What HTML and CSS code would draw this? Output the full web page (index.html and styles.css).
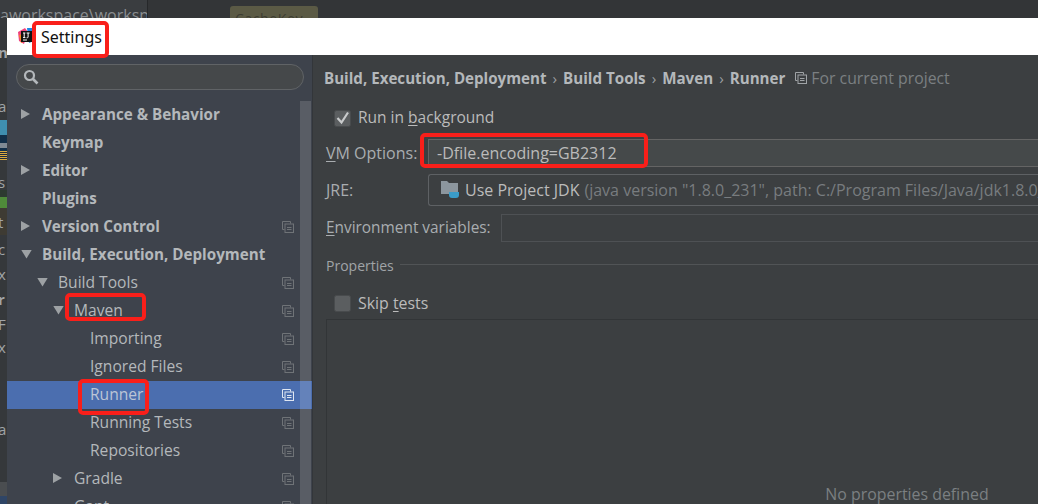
FILE: index.html
```html
<!DOCTYPE html>
<html lang="en">
<head>
<meta charset="utf-8">
<title>Settings</title>
<link rel="stylesheet" href="styles.css">
</head>
<body>
<svg class="defs" width="0" height="0" aria-hidden="true">
  <symbol id="copy" viewBox="0 0 12 12">
    <path d="M.5 8.5V.5h8v2" fill="none" stroke="currentColor"/>
    <path d="M.5 8.5h2" fill="none" stroke="currentColor"/>
    <rect x="3" y="3" width="8.5" height="8.5" fill="none" stroke="currentColor"/>
    <path d="M5 6.5h4.5M5 8.5h4.5" stroke="currentColor"/>
  </symbol>
</svg>
<div class="desktop">
  <div class="topbar">
    <div class="path">aworkspace\workspa</div>
    <div class="tab">CacheKey</div>
  </div>
  <div class="strip">
    <div class="s s1">n</div>
    <div class="s s2">a</div>
    <div class="s s3"></div>
    <div class="s s4"><i></i></div>
    <div class="s s5"></div>
    <div class="s s6">s</div>
    <div class="s s7"></div>
    <div class="s s8"></div>
    <div class="s s9">t</div>
    <div class="s s10">c</div>
    <div class="s s11">x</div>
    <div class="s s12">r</div>
    <div class="s s13">F</div>
    <div class="s s14">x</div>
    <div class="s s15">a</div>
    <div class="s s16"></div>
    <div class="s s17"></div>
  </div>

  <div class="dialog">
    <header class="titlebar">
      <svg class="logo" width="17" height="17" viewBox="0 0 17 17">
        <path d="M0 4 7 0l3 4-4 12-5-3z" fill="#f0417c"/>
        <path d="M9 0h5l3 4-1 9-5 2z" fill="#1e88e5"/>
        <path d="M1 7l4-1 2 7-4 2z" fill="#f58a1f"/>
        <rect x="3" y="3" width="11" height="11" fill="#111"/>
        <path d="M5 5h2.4M6.2 5v4.6M5 9.6h2.4M8.6 5h3M10.1 5v4.2q0 .7-1.5.6M5 12h4" stroke="#fff" fill="none"/>
      </svg>
      <span class="title">Settings</span>
    </header>
    <div class="content">
      <aside class="sidebar">
        <div class="search">
          <svg width="16" height="16" viewBox="0 0 16 16"><circle cx="6.5" cy="6.5" r="4.5" fill="none" stroke="#b4b8bb" stroke-width="2.2"/><path d="M10 10l4.5 4.5" stroke="#b4b8bb" stroke-width="2.6"/></svg>
        </div>
        <div class="treewrap">
          <ul class="tree">
            <li class="row bold l0"><span class="arrow right"></span>Appearance &amp; Behavior</li>
            <li class="row bold l0"><span class="arrow none"></span>Keymap</li>
            <li class="row bold l0"><span class="arrow right"></span>Editor</li>
            <li class="row bold l0"><span class="arrow none"></span>Plugins</li>
            <li class="row bold l0"><span class="arrow right"></span>Version Control<svg class="copy"><use href="#copy"/></svg></li>
            <li class="row bold l0"><span class="arrow down"></span>Build, Execution, Deployment</li>
            <li class="row l1"><span class="arrow down"></span>Build Tools<svg class="copy"><use href="#copy"/></svg></li>
            <li class="row l2"><span class="arrow down"></span>Maven<svg class="copy"><use href="#copy"/></svg></li>
            <li class="row l3">Importing<svg class="copy"><use href="#copy"/></svg></li>
            <li class="row l3">Ignored Files<svg class="copy"><use href="#copy"/></svg></li>
            <li class="row l3 selected">Runner<svg class="copy"><use href="#copy"/></svg></li>
            <li class="row l3">Running Tests<svg class="copy"><use href="#copy"/></svg></li>
            <li class="row l3">Repositories<svg class="copy"><use href="#copy"/></svg></li>
            <li class="row l2"><span class="arrow right"></span>Gradle<svg class="copy"><use href="#copy"/></svg></li>
            <li class="row l2"><span class="arrow none"></span>Gant<svg class="copy"><use href="#copy"/></svg></li>
          </ul>
          <div class="scrollbar"></div>
        </div>
      </aside>
      <main class="panel">
        <div class="crumbs">
          <b>Build, Execution, Deployment</b><span class="sep">›</span><b>Build Tools</b><span class="sep">›</span><b>Maven</b><span class="sep">›</span><b>Runner</b>
          <svg class="copy crumbicon"><use href="#copy"/></svg><span class="scope">For current project</span>
        </div>
        <label class="check first">
          <svg class="box" width="17" height="17" viewBox="0 0 17 17"><rect x=".5" y=".5" width="16" height="16" rx="2" fill="#5b5e60" stroke="#484b4d"/><path d="M3.5 8l4 4.5L14 2.5" fill="none" stroke="#c9cbcc" stroke-width="2.2"/></svg>
          <span>Run in <u>b</u>ackground</span>
        </label>
        <div class="field vm">
          <span class="lbl"><u>V</u>M Options:</span>
          <div class="input">-Dfile.encoding=GB2312</div>
        </div>
        <div class="field jre">
          <span class="lbl"><u>J</u>RE:</span>
          <div class="combo">
            <svg width="19" height="20" viewBox="0 0 19 20"><path d="M0 1h6l2 2h9v11H0z" fill="#8c969e"/><path d="M8 12h10v3q0 3-3 3h-4q-3 0-3-3z" fill="#3a9cc9"/></svg>
            <span>Use Project JDK</span><span class="dim">(java version "1.8.0_231", path: C:/Program Files/Java/jdk1.8.0_231)</span>
          </div>
        </div>
        <div class="field env">
          <span class="lbl"><u>E</u>nvironment variables:</span>
          <div class="envbox"></div>
        </div>
        <div class="group"><span>Properties</span><i></i></div>
        <label class="check skip">
          <svg class="box" width="17" height="17" viewBox="0 0 17 17"><rect x=".5" y=".5" width="16" height="16" rx="2" fill="#5b5e60" stroke="#484b4d"/></svg>
          <span>Skip <u>t</u>ests</span>
        </label>
        <div class="table">No properties defined</div>
      </main>
    </div>
  </div>

  <div class="mark m-settings"></div>
  <div class="mark m-maven"></div>
  <div class="mark m-runner"></div>
  <div class="mark m-vm"></div>
</div>
</body>
</html>
```
FILE: styles.css
```css
* { box-sizing: border-box; }
html, body { margin: 0; padding: 0; }
body { background: #2b2b2b; font-family: "Open Sans", "Noto Sans", sans-serif; font-size: 15px; color: #bbb; overflow: hidden; }
.defs { position: absolute; }
.desktop { position: relative; width: 1038px; height: 504px; overflow: hidden; background: #2f3133; }

.topbar { height: 18px; display: flex; background: #333537; overflow: hidden; }
.path { width: 148px; padding-top: 4px; font-size: 16px; line-height: 22px; color: #8a8e91; white-space: nowrap; overflow: hidden; border-right: 1px solid #26282a; background: #3a3d40; }
.tab { margin: 6px 0 0 82px; width: 88px; height: 30px; background: #5b5a45; border-radius: 3px; color: #3c3c32; padding: 3px 5px; font-size: 14px; letter-spacing: .6px; }

.strip { width: 7px; height: 486px; display: flex; flex-direction: column; overflow: hidden; background: #35383b; font-size: 15px; color: #a0a4a7; }
.s { flex: none; line-height: 20px; white-space: nowrap; text-indent: -2px; }
.s1 { padding-top: 22px; line-height: 24px; font-weight: 700; box-sizing: content-box; height: 10px; }
.s2 { height: 70px; padding-top: 46px; line-height: 20px; }
.s3 { height: 15px; background: #3f8fb0; }
.s4 { height: 16px; background: #12304a; }
.s4 i { display: block; height: 5px; margin-top: 8px; background: #7f8a94; }
.s5 { height: 9px; background: repeating-linear-gradient(#d9a93f 0 1px, #1f2b3c 1px 2px); }
.s6 { height: 30px; padding-top: 12px; }
.s7 { height: 7px; background: #2d3a30; }
.s8 { height: 11px; background: #4f8b3a; }
.s9 { height: 27px; padding-top: 4px; background: #3e3b33; }
.s10 { height: 25px; padding-top: 4px; }
.s11 { height: 25px; padding-top: 4px; }
.s12 { height: 25px; padding-top: 4px; font-weight: 700; }
.s13 { height: 25px; padding-top: 4px; }
.s14 { height: 22px; padding-top: 2px; }
.s15 { height: 125px; padding-top: 62px; }
.s16 { height: 14px; background: #4a4d50; }
.s17 { height: 20px; background: #2f4566; }

.dialog { position: absolute; left: 7px; top: 18px; width: 1031px; height: 486px; display: flex; flex-direction: column; overflow: hidden; background: #3c3f41; }
.titlebar { flex: none; height: 37px; background: #fff; display: flex; align-items: center; padding-left: 11px; }
.title { margin-left: 6px; font-family: "Noto Sans", sans-serif; font-size: 16px; color: #111; }
.content { flex: 1; display: flex; min-height: 0; }

.sidebar { flex: none; width: 306px; background: #3e434c; border-right: 1px solid #33363a; display: flex; flex-direction: column; }
.search { flex: none; margin: 9px 8px 11px 9px; height: 26px; border: 1px solid #606366; border-radius: 13px; background: #45484a; display: flex; align-items: center; padding-left: 6px; }
.treewrap { flex: 1; position: relative; overflow: hidden; }
.tree { list-style: none; margin: 0; padding: 0; }
.row { height: 28px; padding-bottom: 2px; display: flex; align-items: center; position: relative; white-space: nowrap; font-size: 15.6px; color: #b4b8bb; }
.row.bold { font-weight: 700; font-size: 15.2px; }
.l0 { padding-left: 14px; }
.l1 { padding-left: 30px; }
.l2 { padding-left: 46px; }
.l3 { padding-left: 83px; }
.arrow { flex: none; width: 21px; height: 10px; margin-right: 0; }
.arrow.right { background: #9da1a4; width: 9px; height: 10px; margin-right: 12px; clip-path: polygon(0 0, 100% 50%, 0 100%); }
.arrow.down { background: #9da1a4; width: 11px; height: 9px; margin-right: 10px; clip-path: polygon(0 0, 100% 0, 50% 100%); }
.selected { background: #4b6eaf; color: #bcc5d6; }
.copy { position: absolute; left: 275px; top: 8px; width: 12px; height: 12px; color: #6f7377; }
.selected .copy { color: #dfe6f2; }
.scrollbar { position: absolute; right: 1px; top: 0; bottom: 0; width: 11px; background: rgba(255,255,255,.14); }

.panel { flex: 1; min-width: 0; padding-left: 11px; }
.crumbs { height: 46px; display: flex; align-items: center; white-space: nowrap; font-size: 15.15px; color: #b4b8bb; }
.crumbs b { font-weight: 700; }
.sep { margin: 0 6px; color: #9a9da0; }
.crumbicon { position: static; margin-left: 10px; color: #a0a4a7; flex: none; }
.scope { margin-left: 4px; color: #7b7f82; font-size: 15.8px; }
.check { display: flex; align-items: center; height: 20px; margin-left: 10px; font-size: 15.5px; }
.skip { font-size: 15.9px; }
.check span { margin-left: 7px; padding-bottom: 2px; }
.skip span { padding-bottom: 0; }
.check u, .lbl u { text-underline-offset: 2px; }
.first { margin-top: 7px; }
.field { display: flex; align-items: center; white-space: nowrap; margin-left: 2px; }
.lbl { color: #a9adb0; flex: none; width: 102px; padding-bottom: 1px; font-size: 16px; }
.vm { margin-top: 11px; height: 28px; }
.input { flex: none; width: 640px; height: 28px; background: #45494a; border: 1px solid #646464; border-right: 0; padding-left: 8px; line-height: 26px; font-size: 16px; }
.jre { margin-top: 7px; height: 32px; }
.combo { flex: none; width: 800px; height: 32px; border: 1px solid #5e6164; border-right: 0; border-radius: 3px 0 0 3px; display: flex; align-items: center; padding-left: 12px; overflow: hidden; font-size: 16px; }
.combo span { margin-left: 5px; padding-bottom: 1px; flex: none; }
.combo .dim { color: #787c7f; }
.env { margin-top: 8px; height: 28px; }
.env .lbl { width: 175px; font-size: 15.4px; }
.envbox { flex: 1; height: 28px; border: 1px solid #4e5154; border-right: 0; }
.group { display: flex; align-items: center; margin: 8px 0 0 2px; height: 28px; color: #a0a4a7; font-size: 14px; }
.group span { padding-top: 2px; }
.group i { flex: 1; height: 1px; background: #515456; margin-left: 6px; }
.skip { margin-top: 15px; }
.table { width: 1162px; margin-left: 2px; height: 200px; margin-top: 6px; border: 1px solid #323537; padding-top: 163px; text-align: center; color: #7b7f82; font-size: 15.9px; }

.mark { position: absolute; border: 4px solid #f91f1a; border-radius: 5px; pointer-events: none; }
.m-settings { left: 32px; top: 21px; width: 77px; height: 37px; }
.m-maven { left: 65px; top: 293px; width: 81px; height: 28px; }
.m-runner { left: 78px; top: 379px; width: 71px; height: 36px; }
.m-vm { left: 420px; top: 133px; width: 228px; height: 35px; }
```
